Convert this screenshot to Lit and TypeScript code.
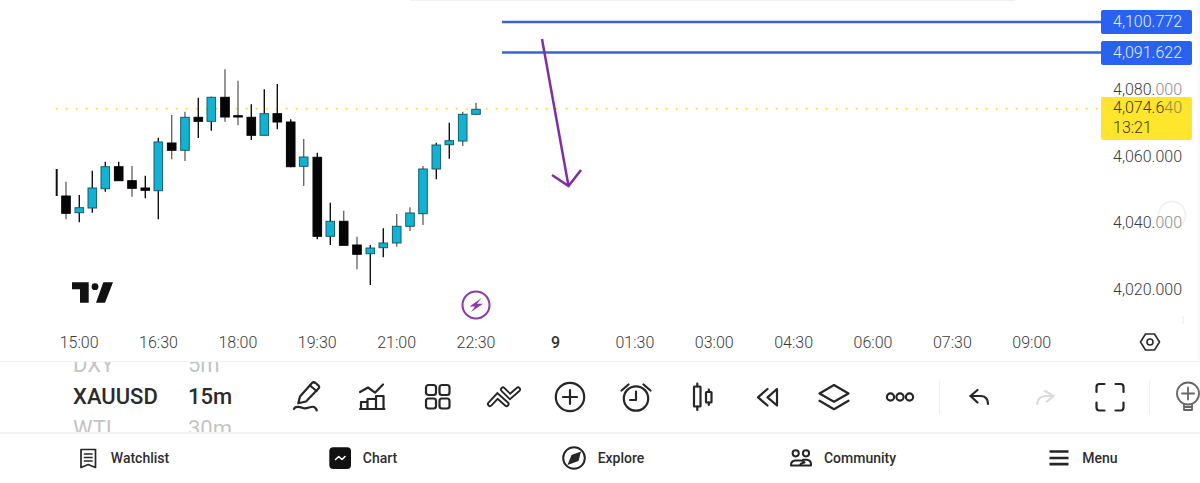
import { LitElement, html, css, svg } from "lit";
import { customElement } from "lit/decorators.js";

// x, high, low, bodyTop, bodyBottom, up, wick grey
const C: [number, number, number, number, number, number, number][] = [
  [66, 181.7, 219.3, 196, 213.3, 0, 1],
  [79.3, 195, 222.3, 207.7, 212.7, 1, 0],
  [92.3, 170.7, 212.7, 188, 208, 1, 0],
  [105.3, 161.7, 191.7, 166.7, 188.7, 1, 0],
  [118.7, 161.7, 180.7, 166.7, 180.7, 0, 0],
  [132, 166, 196.7, 180.7, 188.3, 0, 1],
  [145.3, 175.7, 198.3, 188, 190.3, 0, 0],
  [158.3, 137.7, 219.3, 142, 190.7, 1, 0],
  [171.7, 115, 159.3, 143, 150.3, 0, 1],
  [185, 111.7, 161, 117.3, 150.3, 1, 1],
  [198.3, 97.7, 138, 117.3, 121.3, 0, 0],
  [211.3, 96.7, 130.7, 97.3, 121.3, 1, 0],
  [225, 69.3, 121.7, 97.3, 117, 0, 1],
  [238, 80.7, 125.3, 115.7, 117, 0, 1],
  [251.3, 104.3, 140, 117.3, 135.3, 0, 0],
  [264.3, 89.3, 135.3, 113.7, 135.3, 1, 0],
  [277.3, 84, 129.3, 113.7, 122, 0, 0],
  [290.7, 119.3, 167.3, 122, 166.7, 0, 0],
  [303.7, 139, 186, 157, 166.3, 1, 1],
  [317.3, 152.7, 239.3, 157.3, 236.3, 0, 0],
  [330.3, 202.7, 245, 221.3, 236.3, 1, 0],
  [343.7, 210.7, 245.3, 221.3, 245.3, 0, 1],
  [357, 236.7, 269.3, 245, 254.3, 0, 1],
  [370.3, 245, 285, 248, 253.7, 1, 0],
  [383.3, 228.3, 257.3, 243, 247.7, 1, 0],
  [396.7, 214, 246.7, 226.3, 243, 1, 1],
  [410, 207.3, 231, 213, 226.3, 1, 1],
  [423, 166, 225, 169, 213.7, 1, 1],
  [436.3, 142.7, 179.3, 145, 169, 1, 0],
  [449.3, 122.7, 158.7, 140.7, 144.7, 1, 0],
  [462.7, 111.7, 146, 114.3, 141, 1, 1],
  [476, 102.7, 115, 109.3, 114.3, 1, 1],
];

const TIMES = ["15:00", "16:30", "18:00", "19:30", "21:00", "22:30", "9", "01:30", "03:00", "04:30", "06:00", "07:30", "09:00"];

const PRICES: [string, string, number][] = [
  ["4,080.", "000", 90],
  ["4,060.000", "", 157],
  ["4,040.", "000", 223],
  ["4,020.000", "", 290],
];

const ic = (body: unknown) => html`<svg class="ic" width="34" height="34" viewBox="0 0 34 34">${body}</svg>`;

@customElement("app-root")
export class AppRoot extends LitElement {
  static styles = css`
    :host { display: block; width: 1200px; height: 483px; overflow: hidden; background: #fff; font-family: Roboto, "Liberation Sans", sans-serif; color: #222; }
    .chart { height: 362px; display: flex; flex-direction: column; border-bottom: 1px solid #f3f3f3; box-sizing: border-box; }
    .canvas { position: relative; height: 324px; }
    .plot { position: absolute; inset: 0; }
    .topstrip { position: absolute; left: 410px; top: 0; width: 605px; height: 1px; background: #f0f0f0; }
    .edge { position: absolute; right: 0; top: 0; bottom: -36px; width: 3px; background: #fafafa; }
    .price { position: absolute; left: 1113px; font-size: 16px; line-height: 18px; transform: translateY(-9px); color: #3a3a3a; font-weight: 300; white-space: nowrap; }
    .fade { color: #8c8c8c; }
    .tag { position: absolute; left: 1101px; width: 91px; box-sizing: border-box; padding-left: 12px; border-radius: 2px; font-size: 16px; font-weight: 300; }
    .blue { height: 24px; line-height: 24px; background: #2962f0; color: #e6edff; }
    .t1 { top: 10px; }
    .t2 { top: 41px; }
    .yellow { top: 97px; height: 43px; background: #ffe52c; color: #3d3718; line-height: 20px; padding-top: 1px; }
    .yellow .fade { color: #8f8a4a; }
    .time-axis { display: flex; height: 36px; align-items: center; padding-left: 39.4px; font-size: 16px; font-weight: 300; color: #3a3a3a; }
    .time-axis span { width: 79.4px; text-align: center; flex: none; }
    .time-axis .bold { color: #333; font-weight: 500; }
    .hex { margin-left: 67.6px; flex: none; }
    .toolbar { height: 72px; display: flex; align-items: center; overflow: hidden; border-bottom: 2px solid #f4f4f4; box-sizing: border-box; }
    .wheel { flex: none; display: flex; flex-direction: column; justify-content: center; height: 96px; font-size: 22px; line-height: 32px; font-weight: 500; color: #2b2b2b; }
    .wheel div.dim { color: #c4c4c4; font-weight: 400; }
    .sym { width: 115px; margin-left: 73px; }
    .tf { width: 94px; }
    .tool { flex: none; width: 66px; display: flex; justify-content: center; align-items: center; height: 34px; }
    .tool.first { width: 60px; margin-right: -3px; }
    .tool.off { opacity: 0.16; }
    .sep { flex: none; width: 1px; height: 33px; background: #efefef; margin: 0 5px 0 6px; }
    .ic { overflow: visible; display: block; fill: none; stroke: #262626; stroke-width: 2.2; stroke-linecap: round; stroke-linejoin: round; }
    .nav { height: 49px; padding-bottom: 1px; box-sizing: border-box; display: grid; grid-template-columns: repeat(5, 240px); align-items: center; }
    .nav-item { display: flex; justify-content: center; align-items: center; gap: 12px; padding-left: 6px; font-size: 14px; font-weight: 500; color: #2e2e2e; }
    .nav-item svg { display: block; overflow: visible; fill: none; stroke: #262626; stroke-width: 2; stroke-linecap: round; stroke-linejoin: round; }
  `;

  private candles() {
    return C.map(([x, hi, lo, t, b, up, grey]) => svg`
      <line x1=${x} x2=${x} y1=${hi} y2=${lo} stroke=${grey ? "#6a6a6a" : "#111"} stroke-width="1.4"/>
      <rect x=${x - 4.3} y=${t} width="8.6" height=${Math.max(b - t, 1)} fill=${up ? "#12b3d2" : "#050505"} stroke=${up ? "#175c6d" : "#050505"} stroke-width="1"/>`);
  }

  render() {
    return html`
      <section class="chart">
        <div class="canvas">
          <div class="topstrip"></div>
          <svg class="plot" width="1200" height="324" viewBox="0 0 1200 324">
            <line x1="55.700" x2="1100" y1="108.700" y2="108.700" stroke="#ffe040" stroke-width="2" stroke-dasharray="2 8"/>
            <line x1="56.700" x2="56.700" y1="169" y2="196" stroke="#111" stroke-width="2"/>
            ${this.candles()}
            <line x1="502" x2="1101" y1="22" y2="22" stroke="#3a62d6" stroke-width="2.400"/>
            <line x1="502" x2="1101" y1="52.500" y2="52.500" stroke="#3a62d6" stroke-width="2.400"/>
            <path d="M542 39 568.500 186M552 175 568.500 186 581 170" fill="none" stroke="#7f2ea6" stroke-width="2.500"/>
            <path d="M72 282.300H88.700V302.700H80V289.300H72Z" fill="#111"/>
            <circle cx="95" cy="286.700" r="3.400" fill="#111"/>
            <path d="M103.300 282.300H113L105 302.700H96Z" fill="#111"/>
            <circle cx="476" cy="305" r="13.500" fill="none" stroke="#8b3aa8" stroke-width="2"/>
            <path d="M481.500 298 469.500 306.500H475L471 312 483 303.800H477Z" fill="#8b3aa8"/>
            <circle cx="1172" cy="215" r="13.500" fill="none" stroke="#f0f0f0" stroke-width="1.500"/>
            <path d="M1183 316V334L1166 328" fill="none" stroke="#f2f2f2" stroke-width="1.500"/>
          </svg>
          ${PRICES.map(([a, f, y]) => html`<div class="price" style="top:${y}px">${a}<span class="fade">${f}</span></div>`)}
          <div class="tag blue t1">4,100.772</div>
          <div class="tag blue t2">4,091.622</div>
          <div class="tag yellow">4,074.6<span class="fade">40</span><br />13:21</div>
          <div class="edge"></div>
        </div>
        <div class="time-axis">
          ${TIMES.map((t) => html`<span class=${t === "9" ? "bold" : ""}>${t}</span>`)}
          <svg class="hex" width="22" height="20" viewBox="0 0 22 20" fill="none" stroke="#2a2a2a" stroke-width="1.600" stroke-linejoin="round">
            <path d="M6.500 2H15.500L20.500 10 15.500 18H6.500L1.500 10Z"/>
            <circle cx="11" cy="10" r="3"/>
          </svg>
        </div>
      </section>

      <section class="toolbar">
        <div class="wheel sym"><div class="dim">DXY</div><div>XAUUSD</div><div class="dim">WTI</div></div>
        <div class="wheel tf"><div class="dim">5m</div><div>15m</div><div class="dim">30m</div></div>
        <div class="tool first">${ic(svg`
          <path d="M3.300 23.300 5 16.500 17 3Q18.500 1.500 20.500 3L23.300 5.300Q25 7 23.500 8.500L11 21.500Z"/>
          <path d="M15 5.500 21.500 11"/>
          <path d="M-1 29C0 26 4 26.500 8 28 12 29.500 16 25.500 19 27 21 28 22 30.500 21.700 30.500"/>`)}</div>
        <div class="tool">${ic(svg`
          <path d="M5 12 13 7.500 20 12.700 28 4.500"/>
          <path d="M6 29V22H12.500V29ZM12.500 29V19H21V29ZM21 29V16H28.500V29ZM5 29H29.500"/>`)}</div>
        <div class="tool">${ic(svg`
          <rect x="5" y="5" width="10" height="10" rx="2.500"/><rect x="18.500" y="5" width="10" height="10" rx="2.500"/>
          <rect x="5" y="18.500" width="10" height="10" rx="2.500"/><rect x="18.500" y="18.500" width="10" height="10" rx="2.500"/>`)}</div>
        <div class="tool">${ic(svg`
          <g stroke-width="6" stroke-linecap="round" stroke-linejoin="miter"><path d="M3 24 10.500 16 19.500 24"/><path d="M16 9.500 23 16.500 31 9.500"/></g>
          <g stroke="#fff" stroke-width="2.300" stroke-linejoin="miter"><path d="M3 24 10.500 16 19.500 24"/><path d="M16 9.500 23 16.500 31 9.500"/></g>`)}</div>
        <div class="tool">${ic(svg`<circle cx="17" cy="17" r="14.200"/><path d="M17 10V24M10 17H24"/>`)}</div>
        <div class="tool">${ic(svg`<circle cx="17" cy="18.500" r="12.200"/><path d="M17 11.500V20H11M2.500 10.500 9.500 4.500M24.500 4.500 31.500 10.500"/>`)}</div>
        <div class="tool">${ic(svg`
          <rect x="9" y="6.500" width="6.500" height="20" rx="0.500"/><path d="M12.300 3.500V6.500M12.300 26.500V30"/>
          <rect x="21" y="12" width="5.500" height="10.500" rx="0.500"/><path d="M23.800 9.500V12M23.800 22.500V25"/>`)}</div>
        <div class="tool">${ic(svg`<path d="M16.500 9 7 17.300 16.500 25.500"/><path d="M26 9 16.500 17.300 26 25.500Z"/>`)}</div>
        <div class="tool">${ic(svg`<path d="M2.500 13.500 17 5 31.500 13.500 17 21.700Z"/><path d="M2.500 20.700 17 29.200 31.500 20.700"/>`)}</div>
        <div class="tool">${ic(svg`<circle cx="7.500" cy="17" r="3.600"/><circle cx="17" cy="17" r="3.600"/><circle cx="26.500" cy="17" r="3.600"/>`)}</div>
        <div class="sep"></div>
        <div class="tool">${ic(svg`<path d="M16.500 10 9.500 16 16.500 22.500"/><path d="M9.500 16H20Q27 16.500 27 24"/>`)}</div>
        <div class="tool off">${ic(svg`<path d="M18 11 26.500 16 20 21.700"/><path d="M26 16H18Q11 16.500 10 24"/>`)}</div>
        <div class="tool">${ic(svg`<path d="M3.500 12V7Q3.500 4 6.500 4H11.500M22.500 4H27.500Q30.500 4 30.500 7V12M30.500 22.500V27.500Q30.500 30.500 27.500 30.500H22.500M11.500 30.500H6.500Q3.500 30.500 3.500 27.500V22.500"/>`)}</div>
        <div class="sep"></div>
        <div class="tool">${ic(svg`
          <g stroke="#666" stroke-width="1.800"><circle cx="17" cy="13.500" r="11"/><path d="M17 7.500V19.500M11 13.500H23M13 24.500V30H21V24.500M13 27H21"/></g>`)}</div>
      </section>

      <nav class="nav">
        <div class="nav-item">
          <svg width="22" height="22" viewBox="0 0 22 22"><path d="M4 2.500H18.500V20.500L11.200 17.500 4 20.500ZM7.500 7H15M7.500 10.500H15M7.500 14H15" stroke-width="1.700"/></svg>
          Watchlist
        </div>
        <div class="nav-item">
          <svg width="22" height="22" viewBox="0 0 22 22"><rect x="0.300" y="0.300" width="21.700" height="21.700" rx="4" fill="#111" stroke="none"/><path d="M6.500 12.500 9.800 9.500 13 12.500 16 9.500" stroke="#fff" stroke-width="1.600"/></svg>
          Chart
        </div>
        <div class="nav-item">
          <svg width="24" height="24" viewBox="0 0 24 24"><circle cx="12" cy="12" r="10.800"/><path d="M19 5.500 16.500 15 5.500 19 9.500 9Z" fill="#262626" stroke="none"/></svg>
          Explore
        </div>
        <div class="nav-item">
          <svg width="22" height="18" viewBox="0 0 22 18" stroke-width="1.700"><circle cx="5.700" cy="4.300" r="3.100"/><circle cx="16" cy="4.300" r="3.100"/><path d="M1 16.500Q0.500 12.500 5 11.500H11Q13.500 11.500 14.500 13.500M1 16.500H21Q21.500 11.500 17 10.800H13M10 16.500Q10.500 14 14.500 13.500"/></svg>
          Community
        </div>
        <div class="nav-item">
          <svg width="22" height="22" viewBox="0 0 22 22"><path d="M1.500 4.500H20.500M1.500 11H20.500M1.500 17.200H20.500" stroke-width="2.700" stroke-linecap="butt"/></svg>
          Menu
        </div>
      </nav>
    `;
  }
}
